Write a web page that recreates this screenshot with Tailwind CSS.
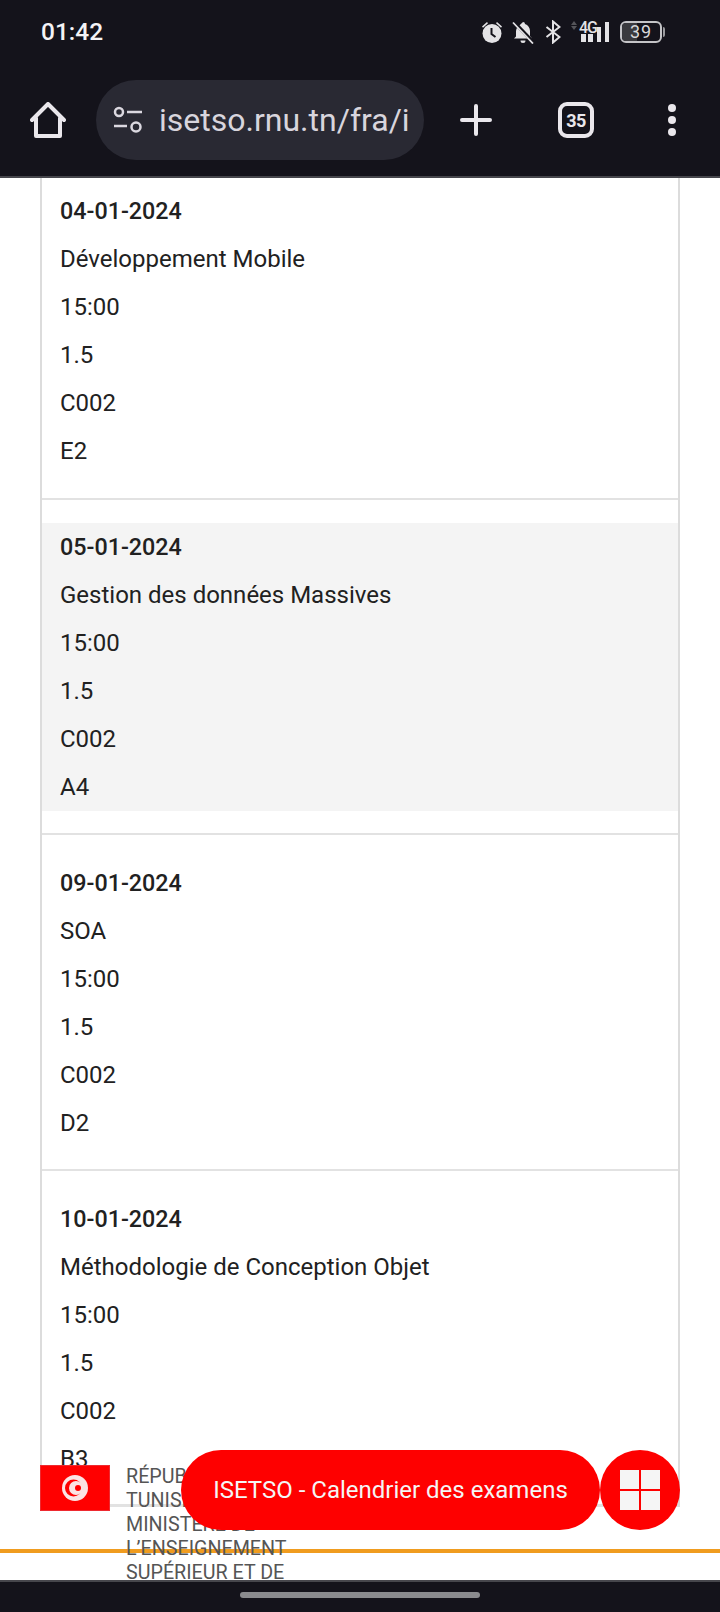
<!DOCTYPE html>
<html lang="fr">
  <head>
    <meta charset="UTF-8" />
    <meta name="viewport" content="width=device-width, initial-scale=1.0" />
    <title>ISETSO - Calendrier des examens</title>
    <script src="https://cdn.jsdelivr.net/npm/@tailwindcss/browser@4"></script>
  </head>
  <body class="w-[720px] h-[1612px] overflow-hidden bg-white font-['Roboto',sans-serif] flex flex-col">
    <!-- browser chrome -->
    <header class="h-[178px] shrink-0 bg-[#14131b] border-b-2 border-[#46464c] flex flex-col">
      <div class="h-[64px] pl-[41px] pr-[55px] flex items-center justify-between">
        <span class="text-[24.500px] font-medium text-[#f4f3f6]">01:42</span>
        <div class="flex items-center">
          <svg class="w-[24px] h-[24px]" viewBox="0 0 24 24" fill="#e4e3e6">
            <path d="M2 6.500l5-4.500 1 1.200-5 4.500zM22 6.500l-5-4.500-1 1.200 5 4.500z" />
            <circle cx="12" cy="13.500" r="9.500" />
            <path d="M11.500 8v6l4 3" fill="none" stroke="#14131b" stroke-width="2" />
          </svg>
          <svg class="w-[24px] h-[24px] ml-[7px]" viewBox="0 0 24 24" fill="#e4e3e6">
            <path d="M12 2a2 2 0 0 1 2 2c3 1 5 4 5 7v5l2 2.500H5.500L3 18.500l2-2v-5c0-1.500.5-3 1.500-4.300zM9.500 20.500h5a2.500 2.500 0 0 1-5 0z" />
            <path d="M3 2l19 20" stroke="#14131b" stroke-width="3.500" />
            <path d="M2 2.500l20 21" stroke="#e4e3e6" stroke-width="1.800" />
          </svg>
          <svg class="w-[16px] h-[24px] ml-[10px]" viewBox="0 0 16 24" fill="none" stroke="#e4e3e6" stroke-width="2">
            <path d="M1.500 7l13 10-6.500 5.500V1.500L14.500 7l-13 10" />
          </svg>
          <div class="relative w-[42px] h-[26px] ml-[8px]">
            <svg class="absolute left-0 top-0 w-[42px] h-[26px]" viewBox="0 0 42 26" fill="#e4e3e6">
              <path d="M5 2l3 4H2zM5 11l3-4H2z" fill="#55555a" />
              <rect x="12" y="15" width="5" height="8" />
              <rect x="19" y="15" width="5" height="8" />
              <rect x="28" y="8" width="4" height="15" />
              <rect x="36" y="3" width="4" height="20" />
            </svg>
            <span class="absolute left-[10px] top-[1px] text-[16px] leading-[15px] font-medium tracking-[-1px] text-[#e4e3e6]">4G</span>
          </div>
          <div class="ml-[9px] flex items-center">
            <div class="w-[42px] h-[22px] rounded-[6px] border-2 border-[#c4c4c7] flex items-center overflow-hidden relative">
              <div class="w-[39%] h-full bg-[#3a3a3e]"></div>
              <span class="absolute inset-0 text-center text-[18px] leading-[18px] tracking-[1px] text-[#d8d8da]">39</span>
            </div>
            <div class="w-[2px] h-[10px] ml-[1px] rounded-r bg-[#9a9a9e]"></div>
          </div>
        </div>
      </div>
      <div class="h-[112px] flex items-start pt-[16px]">
        <svg class="w-[36px] h-[36px] ml-[30px] mt-[22px]" viewBox="0 0 36 36" fill="none" stroke="#eae7ec" stroke-width="4" stroke-linejoin="round" stroke-linecap="round">
          <path d="M2 18L18 2l16 16M6 16v18h24V16" />
        </svg>
        <div class="ml-[30px] w-[328px] h-[80px] rounded-full bg-[#292933] flex items-center pl-[17px]">
          <svg class="w-[30px] h-[30px] shrink-0" viewBox="0 0 30 30" fill="none" stroke="#dbd8e0" stroke-width="2.500">
            <circle cx="6" cy="7" r="4" />
            <path d="M14 7h15M1 21h13" />
            <circle cx="23" cy="22" r="4.500" />
          </svg>
          <span class="ml-[16px] text-[32px] text-[#d8d5dd] whitespace-nowrap">isetso.rnu.tn/fra/i</span>
        </div>
        <svg class="w-[32px] h-[32px] ml-[36px] mt-[24px]" viewBox="0 0 32 32" stroke="#eae7ec" stroke-width="4" stroke-linecap="round">
          <path d="M16 2v28M2 16h28" />
        </svg>
        <div class="w-[36px] h-[36px] ml-[66px] mt-[22px] rounded-[9px] border-4 border-[#eae7ec] flex items-center justify-center text-[18px] font-bold tracking-[-0.5px] text-[#eae7ec]">35</div>
        <div class="ml-[74px] mt-[24px] flex flex-col gap-[4px]">
          <div class="w-[8px] h-[8px] rounded-full bg-[#eae7ec]"></div>
          <div class="w-[8px] h-[8px] rounded-full bg-[#eae7ec]"></div>
          <div class="w-[8px] h-[8px] rounded-full bg-[#eae7ec]"></div>
        </div>
      </div>
    </header>

    <!-- page -->
    <main class="relative flex-1 overflow-hidden text-[24px] leading-[48px] text-[#212121]">
      <div class="mx-[40px] border-x-2 border-[#dcdcdc]">
        <div class="pt-[9px] pb-[23px] border-b-2 border-[#e2e2e2]">
          <div class="pl-[18px]">
            <p class="text-[23.300px] font-medium">04-01-2024</p>
            <p>Développement Mobile</p>
            <p>15:00</p>
            <p>1.5</p>
            <p>C002</p>
            <p>E2</p>
          </div>
        </div>
        <div class="pt-[23px] pb-[22px] border-b-2 border-[#e2e2e2]">
          <div class="pl-[18px] bg-[#f4f4f4]">
            <p class="text-[23.300px] font-medium">05-01-2024</p>
            <p>Gestion des données Massives</p>
            <p>15:00</p>
            <p>1.5</p>
            <p>C002</p>
            <p>A4</p>
          </div>
        </div>
        <div class="pt-[24px] pb-[22px] border-b-2 border-[#e2e2e2]">
          <div class="pl-[18px]">
            <p class="text-[23.300px] font-medium">09-01-2024</p>
            <p>SOA</p>
            <p>15:00</p>
            <p>1.5</p>
            <p>C002</p>
            <p>D2</p>
          </div>
        </div>
        <div class="pt-[24px] pb-[22px] border-b-[3px] border-[#e2e2e2] h-[336px]">
          <div class="pl-[18px]">
            <p class="text-[23.300px] font-medium">10-01-2024</p>
            <p>Méthodologie de Conception Objet</p>
            <p>15:00</p>
            <p>1.5</p>
            <p>C002</p>
            <p>B3</p>
          </div>
        </div>
      </div>

      <!-- footer band, sits behind the floating buttons -->
      <div class="absolute left-0 right-0 top-[1371px] h-[4px] bg-[#f09c1f]"></div>
      <div class="absolute left-0 top-[1287px] flex">
        <div class="ml-[40px] w-[70px] h-[46px] bg-[#ff0000] border border-[#ee2a30] flex items-center justify-center">
          <svg class="w-[28px] h-[28px] blur-[0.6px]" viewBox="0 0 28 28">
            <circle cx="14" cy="14" r="13" fill="#fbe4e4" />
            <circle cx="12.500" cy="14" r="8.500" fill="#ff0000" />
            <circle cx="15" cy="14" r="7" fill="#fbe4e4" />
            <circle cx="17" cy="14" r="3" fill="#ff0000" />
          </svg>
        </div>
        <p class="ml-[16px] w-[180px] text-[19.700px] leading-[24px] text-[#555555]">RÉPUBLIQUE TUNISIENNE MINISTÈRE DE L’ENSEIGNEMENT SUPÉRIEUR ET DE</p>
      </div>

      <!-- floating menu -->
      <div class="absolute left-[181px] top-[1272px] flex">
        <div class="w-[419px] h-[80px] rounded-full bg-[#fe0000] flex items-center justify-center text-[24px] text-[#f5f5f5]">ISETSO - Calendrier des examens</div>
        <div class="w-[80px] h-[80px] rounded-full bg-[#fe0000] flex items-center justify-center">
          <div class="w-[40px] h-[40px] grid grid-cols-2 gap-[2px]">
            <div class="bg-[#f5f5f5]"></div>
            <div class="bg-[#f5f5f5]"></div>
            <div class="bg-[#f5f5f5]"></div>
            <div class="bg-[#f5f5f5]"></div>
          </div>
        </div>
      </div>
    </main>

    <!-- android nav bar -->
    <footer class="h-[32px] shrink-0 bg-[#14131b] border-t-2 border-[#46464c] flex justify-center pt-[10px]">
      <div class="w-[240px] h-[6px] rounded-full bg-[#8a8a8e]"></div>
    </footer>
  </body>
</html>
